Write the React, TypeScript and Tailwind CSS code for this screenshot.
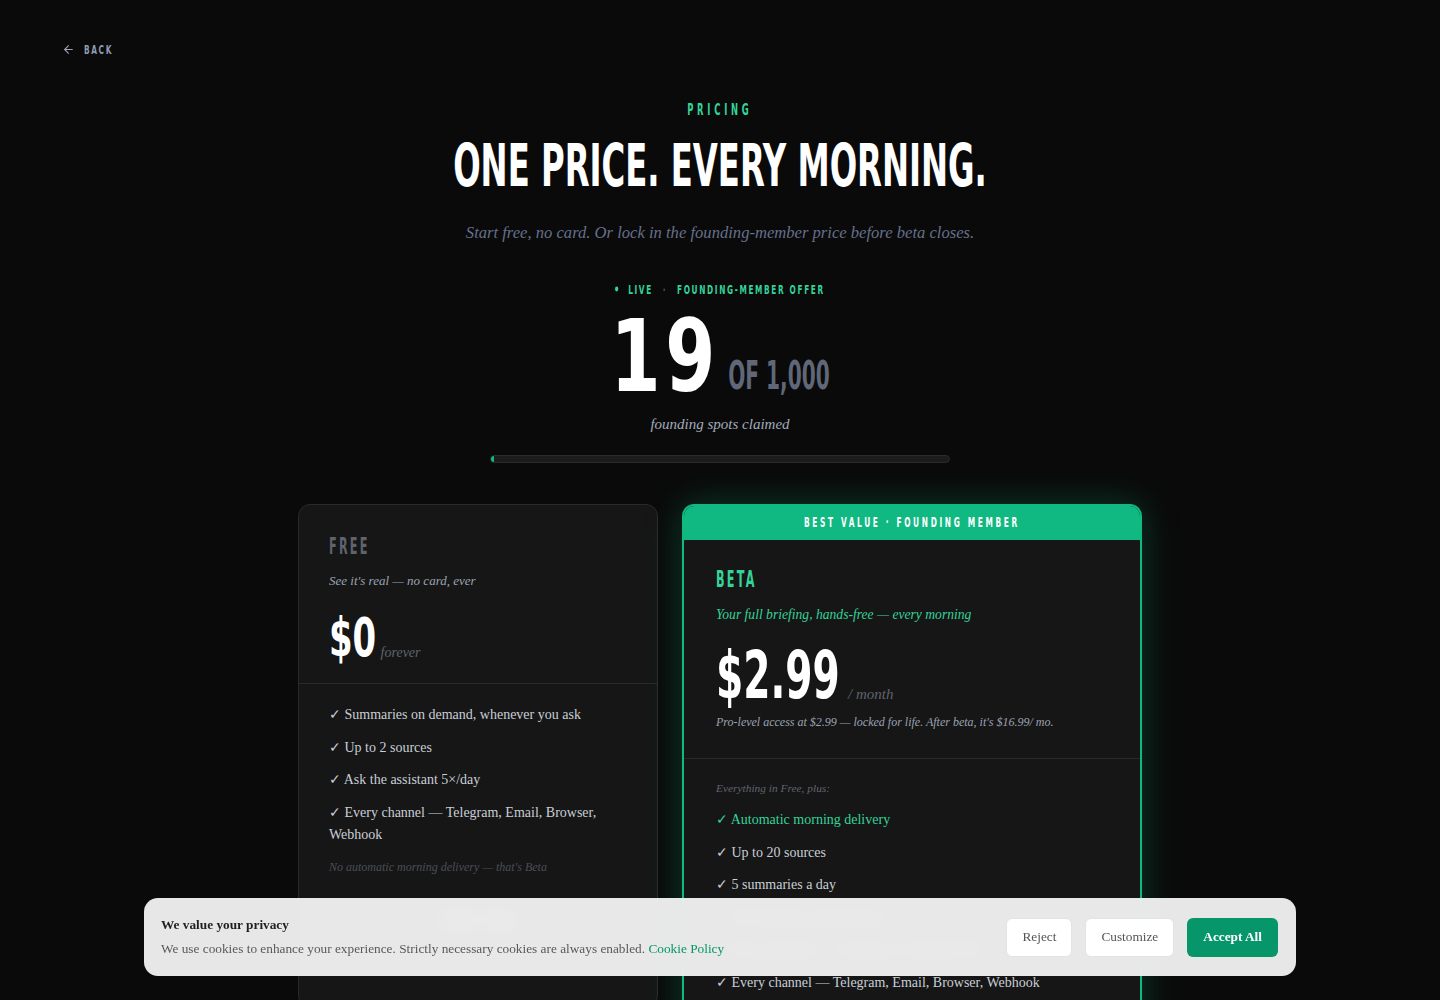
import { ArrowLeft } from 'lucide-react';

// condensed display face: DejaVu Sans Condensed squeezed to look like the poster font
const display = "[font-family:'Liberation_Sans_Narrow','DejaVu_Sans_Condensed',sans-serif] font-bold";
const serif = "[font-family:'Liberation_Serif','Times_New_Roman',serif]";

const freeFeatures = [
  'Summaries on demand, whenever you ask',
  'Up to 2 sources',
  'Ask the assistant 5×/day',
  'Every channel — Telegram, Email, Browser, Webhook',
];

const betaFeatures = [
  'Up to 20 sources',
  '5 summaries a day',
  '100 assistant questions/day',
  'Every platform — YouTube, X, Reddit, RSS',
  'Every channel — Telegram, Email, Browser, Webhook',
];

function FreeCard() {
  return (
    <div className="w-[360px] rounded-xl border border-[#2a2a2a] bg-[#161616]">
      <div className="px-[30px] pt-8 pb-[19px]">
        <h3 className={`${display} text-[16px] leading-[20px] tracking-[0.18em] text-[#5f636d]`}>
          <span className="inline-block origin-left scale-x-[0.78] scale-y-[1.45]">FREE</span>
        </h3>
        <p className={`${serif} mt-[14px] text-[13px] leading-[20px] italic text-[#9aa3b2]`}>
          See it's real — no card, ever
        </p>
        <div className="mt-[27px] flex items-baseline">
          <span className={`${display} inline-block origin-bottom-left scale-x-[0.82] scale-y-[1.15] text-[46px] leading-none text-white`}>
            $0
          </span>
          <span className={`${serif} -ml-[6px] text-[14px] italic text-[#5f6470]`}>forever</span>
        </div>
      </div>
      <div className="border-t border-[#2a2a2a] px-[30px] pt-5 pb-8">
        <ul className={`${serif} flex flex-col gap-[10.5px] text-[14px] leading-[22px] text-[#c9ced6]`}>
          {freeFeatures.map((f) => (
            <li key={f}>✓ {f}</li>
          ))}
          <li className="mt-[2px] text-[12px] leading-[18px] italic text-[#4a4e56]">
            No automatic morning delivery — that's Beta
          </li>
        </ul>
        <button className={`${display} mt-6 h-10 w-full rounded-md border border-[#3a3a3a] text-[12px] tracking-[0.2em] text-white`}>
          <span className="inline-block scale-x-[0.8] scale-y-[1.2]">START FREE</span>
        </button>
        <p className={`${serif} mt-4 text-center text-[12px] italic text-[#5f6470]`}>No card required</p>
      </div>
    </div>
  );
}

function BetaCard() {
  return (
    <div className="w-[460px] overflow-hidden rounded-xl border-2 border-[#10b981] bg-[#161616] shadow-[0_0_36px_rgba(16,185,129,0.28)]">
      <div className={`${display} flex h-[34px] items-center justify-center bg-[#10b981] text-[11px] tracking-[0.32em] text-white`}>
        <span className="inline-block scale-x-[0.75] scale-y-[1.25]">BEST VALUE · FOUNDING MEMBER</span>
      </div>
      <div className="px-[32px] pt-[30px] pb-[27px]">
        <h3 className={`${display} text-[16px] leading-[20px] tracking-[0.18em] text-[#34d399]`}>
          <span className="inline-block origin-left scale-x-[0.78] scale-y-[1.45]">BETA</span>
        </h3>
        <p className={`${serif} mt-[15px] text-[13.6px] leading-[20px] italic text-[#34d399]`}>
          Your full briefing, hands-free — every morning
        </p>
        <div className="mt-[25px] flex items-baseline">
          <span className={`${display} inline-block origin-bottom-left scale-x-[0.75] scale-y-[1.15] text-[58px] leading-none text-white`}>
            $2.99
          </span>
          <span className={`${serif} -ml-[33px] text-[15px] italic text-[#5f6470]`}>/ month</span>
        </div>
        <p className={`${serif} mt-[5px] text-[12px] leading-[18px] italic text-[#9aa3b2]`}>
          Pro-level access at $2.99 — locked for life. After beta, it's $16.99/ mo.
        </p>
      </div>
      <div className="border-t border-[#2a2a2a] px-[32px] pt-5 pb-10">
        <p className={`${serif} text-[11.4px] leading-[18px] italic text-[#5f6470]`}>Everything in Free, plus:</p>
        <ul className={`${serif} mt-3 flex flex-col gap-[10.5px] text-[14px] leading-[22px] text-[#c9ced6]`}>
          <li className="text-[#34d399]">✓ Automatic morning delivery</li>
          {betaFeatures.map((f) => (
            <li key={f}>✓ {f}</li>
          ))}
        </ul>
        <button className={`${display} mt-7 h-11 w-full rounded-md bg-[#10b981] text-[12px] tracking-[0.2em] text-white`}>
          <span className="inline-block scale-x-[0.8] scale-y-[1.2]">CLAIM FOUNDING SPOT</span>
        </button>
      </div>
    </div>
  );
}

function CookieBanner() {
  return (
    <div className={`${serif} fixed bottom-6 left-1/2 flex h-[78px] w-[1152px] -translate-x-1/2 items-center justify-between rounded-[14px] bg-[#f3f3f3]/95 pr-[18px] pl-[17px] backdrop-blur-sm`}>
      <div className="flex flex-col gap-[6px]">
        <p className="text-[13.3px] leading-[18px] font-bold text-[#1f1f1f]">We value your privacy</p>
        <p className="text-[13.3px] leading-[18px] text-[#5a5a5a]">
          We use cookies to enhance your experience. Strictly necessary cookies are always enabled.{' '}
          <a className="text-[#059669]">Cookie Policy</a>
        </p>
      </div>
      <div className="flex items-center gap-[13px]">
        <button className="h-[39px] rounded-md border border-[#e3e3e3] bg-white px-[15px] text-[13.3px] text-[#555]">Reject</button>
        <button className="h-[39px] rounded-md border border-[#e3e3e3] bg-white px-[15px] text-[13.3px] text-[#555]">Customize</button>
        <button className="h-[39px] rounded-md bg-[#069669] px-[16px] text-[13.3px] font-bold text-white">Accept All</button>
      </div>
    </div>
  );
}

export default function App() {
  return (
    <div className="min-h-screen bg-[#0a0a0a] pb-40 text-white">
      <div className="px-[62px] pt-[43px]">
        <a className={`${display} flex h-3 items-center gap-[9px] text-[10px] tracking-[0.2em] text-[#8f9bb0]`}>
          <ArrowLeft size={13} strokeWidth={2} className="text-[#9ca3af]" />
          <span className="inline-block origin-left scale-x-[0.82] scale-y-[1.23]">BACK</span>
        </a>
      </div>

      <section className="flex flex-col items-center">
        <p className={`${display} mt-12 text-[12px] leading-[14px] tracking-[0.4em] text-[#34d399]`}>
          <span className="inline-block scale-x-[0.78] scale-y-[1.37]">PRICING</span>
        </p>
        <h1 className={`${display} mt-[27px] text-[44px] leading-[44px] text-white`}>
          <span className="inline-block scale-x-[0.816] scale-y-[1.34]">ONE PRICE. EVERY MORNING.</span>
        </h1>
        <p className={`${serif} mt-[33px] text-[16.6px] leading-[24px] italic text-[#66708a]`}>
          Start free, no card. Or lock in the founding-member price before beta closes.
        </p>
        <div className={`${display} mt-[37px] flex h-[14px] scale-x-[0.82] scale-y-[1.23] items-center text-[10px] tracking-[0.2em] text-[#34d399]`}>
          <span className="mr-[12px] h-[4px] w-[4px] rounded-full bg-[#34d399]" />
          <span>LIVE</span>
          <span className="mx-[12px] text-[#3b5b4f]">·</span>
          <span>FOUNDING-MEMBER OFFER</span>
        </div>
        <div className="mt-[11px] flex scale-x-[0.8] items-baseline">
          <span className={`${display} text-[100px] leading-none tracking-[0.06em] text-white`}>19</span>
          <span className={`${display} ml-[10px] inline-block origin-bottom scale-y-[1.37] text-[28px] leading-none text-[#5f6778]`}>
            OF 1,000
          </span>
        </div>
        <p className={`${serif} mt-[6px] text-[15px] leading-[22px] italic text-[#a3abba]`}>founding spots claimed</p>
        <div className="mt-5 h-2 w-[460px] overflow-hidden rounded-full border border-[#2a2a2a] bg-[#1c1c1c]">
          <div className="h-full w-[3px] bg-[#10b981]" />
        </div>

        <div className="mt-[41px] flex items-start gap-6">
          <FreeCard />
          <BetaCard />
        </div>
      </section>

      <CookieBanner />
    </div>
  );
}
